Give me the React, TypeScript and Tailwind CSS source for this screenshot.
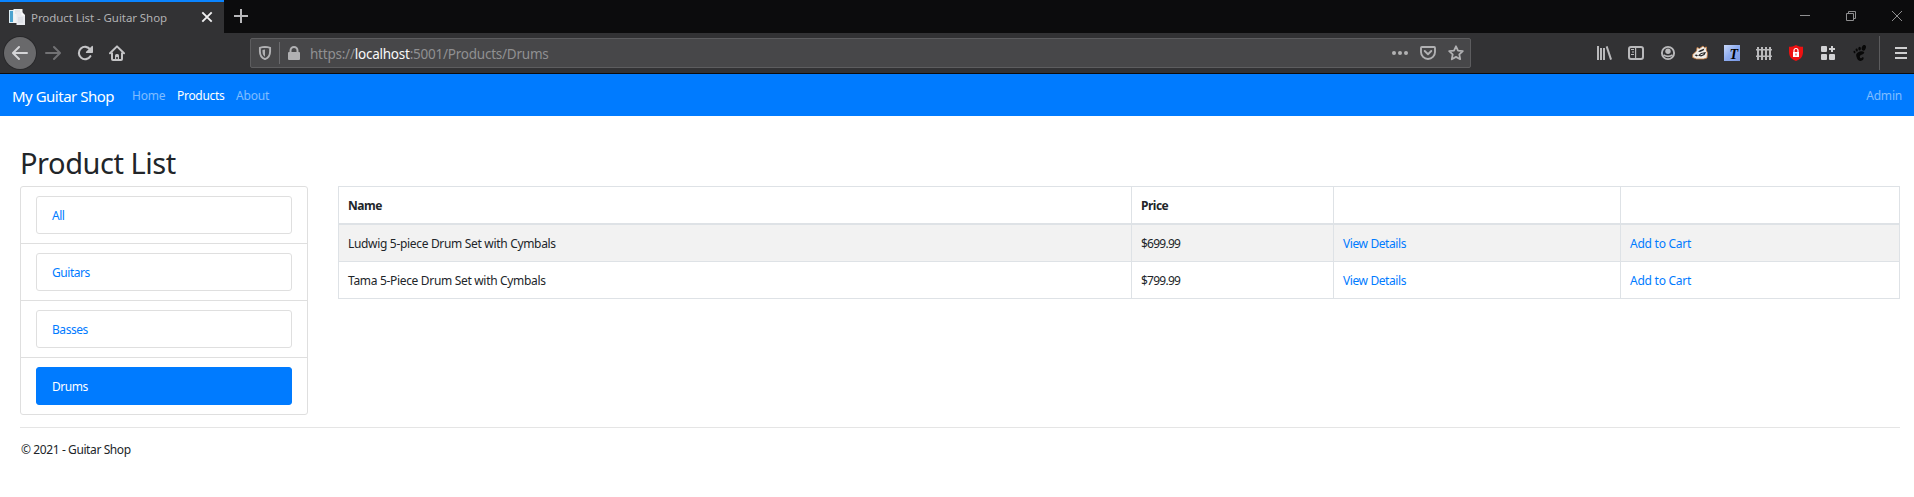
import type { ReactNode } from 'react';

function Icon({ children, className = '' }: { children: ReactNode; className?: string }) {
  return (
    <svg viewBox="0 0 16 16" className={`size-4 shrink-0 ${className}`} fill="currentColor">
      {children}
    </svg>
  );
}

function PageIcon() {
  return (
    <Icon>
      <path d="M0 1h7v13H0z" fill="#dfeef5" />
      <path d="M1 2h3v11H1z" fill="#4ba3cf" />
      <path d="M4.500 0h9v14h-9z" fill="#f2f4f4" />
      <path d="M7.500 3h5.500l3 3v10H7.500z" fill="#e8eaef" />
      <path d="M12.500 3v3.500H16z" fill="#fbfbfd" />
      <path d="M6 2h5M6 4h1.500M9 9h5M9 11h5M9 13h5" stroke="#d3d7df" />
    </Icon>
  );
}

function TabStrip() {
  return (
    <div className="flex h-[33px] bg-[#0c0c0d]">
      <div className="flex h-full w-56 items-center border-t-2 border-[#0a84ff] bg-[#323234] px-[9px] pb-px text-[#b1b1b3]">
        <PageIcon />
        <span className="ml-1.5 flex-1 pt-px text-[11.5px] tracking-[-0.07px] whitespace-nowrap">Product List - Guitar Shop</span>
        <Icon className="text-[#f0f0f1]">
          <path d="M3.300 3.300l9.400 9.400M12.700 3.300l-9.400 9.400" stroke="currentColor" strokeWidth="1.9" />
        </Icon>
      </div>
      <Icon className="mt-2 ml-[9px] text-[#b8b8ba]">
        <path d="M7 1h2v6h6v2H9v6H7V9H1V7h6z" />
      </Icon>
      <div className="ml-auto flex gap-[30px] pt-2 pr-[9px] text-[#8f8f90]">
        <Icon>
          <path d="M3 7h10v1H3z" />
        </Icon>
        <Icon>
          <path d="M3.5 5.5h7v7h-7zM5.5 5V3.5h7v7H11" fill="none" stroke="currentColor" />
        </Icon>
        <Icon>
          <path d="M3 3l10 10M13 3L3 13" stroke="currentColor" />
        </Icon>
      </div>
    </div>
  );
}

function AddressBar() {
  return (
    <div className="ml-[125px] flex h-[30px] w-[1221px] items-center rounded-[2px] border border-[#5d5d5f] bg-[#474749] pl-1.5 text-[#b1b1b3]">
      <Icon>
        <path d="M8 1.900c2 .1 3.700.5 5.100 1v3.600c0 3.700-1.600 6.300-5.100 7.600-3.500-1.300-5.100-3.900-5.100-7.600V2.900c1.400-.5 3.100-.9 5.100-1z" fill="none" stroke="currentColor" strokeWidth="1.900" />
        <path d="M8 4.500v7.200c-1.800-1.100-2.500-2.800-2.500-5.200V5c.8-.3 1.600-.5 2.500-.5z" />
      </Icon>
      <div className="ml-1.5 h-[22px] w-px bg-[#6a6a6d]" />
      <Icon className="ml-1.5">
        <path d="M3.500 7V5.500a4.500 4.500 0 0 1 9 0V7h.5a1 1 0 0 1 1 1v6a1 1 0 0 1-1 1H3a1 1 0 0 1-1-1V8a1 1 0 0 1 1-1zM5.500 7h5V5.500a2.500 2.500 0 0 0-5 0z" />
      </Icon>
      <span className="ml-2 pt-0.5 text-[13.5px] tracking-[-0.23px] whitespace-nowrap text-[#909092]">
        https://<span className="text-[#f9f9fa]">localhost</span>:5001/Products/Drums
      </span>
      <div className="ml-auto flex gap-3 pr-1.5">
        <Icon>
          <circle cx="2" cy="8" r="2" />
          <circle cx="8" cy="8" r="2" />
          <circle cx="14" cy="8" r="2" />
        </Icon>
        <Icon>
          <path d="M1.900 2h12.200a.9.900 0 0 1 .9.900V7A7 7 0 0 1 1 7V2.900a.9.900 0 0 1 .9-.900z" fill="none" stroke="currentColor" strokeWidth="1.900" />
          <path d="M4.700 6L8 9.200 11.300 6" fill="none" stroke="currentColor" strokeWidth="1.900" strokeLinecap="round" strokeLinejoin="round" />
        </Icon>
        <Icon>
          <path d="M8 1.300l2 4.300 4.800.6-3.500 3.200.9 4.800L8 11.900l-4.200 2.300.9-4.800L1.200 6.200 6 5.600z" fill="none" stroke="currentColor" strokeWidth="1.800" strokeLinejoin="round" />
        </Icon>
      </div>
    </div>
  );
}

function Extensions() {
  return (
    <div className="ml-auto flex h-full items-center gap-4 text-[#b9b9bb]">
      <Icon>
        <path d="M1 1h2v14H1zM4 3h2v12H4zM7 3h2v12H7zM9.700 1.700l1.900-.7L16 14.300l-1.900.7z" />
      </Icon>
      <Icon>
        <rect x="1" y="2" width="14" height="12" rx="2" fill="none" stroke="currentColor" strokeWidth="2" />
        <path d="M7 2h1.200v12H7zM3 4h3v1H3zM4 6.500h2v1H4zM3 9h3v1H3z" />
      </Icon>
      <Icon>
        <circle cx="8" cy="8" r="6.100" fill="none" stroke="currentColor" strokeWidth="1.900" />
        <circle cx="8" cy="6.300" r="2.700" />
        <path d="M3.500 10c2 1.200 3 1.300 4.500 1.300s2.500-.1 4.500-1.300" fill="none" stroke="currentColor" strokeWidth="1.700" />
      </Icon>
      <Icon>
        <path d="M.7 9.500L4.500 6l.5-3.500 2.500 1L11 1l1.500 1.500 2-.5-.2 3 1.200 3-.5 5-3.500 1H4.500L.7 12.500z" fill="#f1eee9" stroke="#c5783b" strokeWidth=".8" />
        <path d="M6 6.500L8.500 5l4-1.500-1 2L8 7zM2.500 10l2-.5L6 10.500l-1.500 1zM6 10.500l3-2.500 5-1-1.500 3-3.500 1.500z" fill="#242426" />
        <path d="M8.500 9.800l3-1" stroke="#f1eee9" />
      </Icon>
      <div className="flex size-4 items-end justify-end bg-linear-to-br from-[#c9d8fa] via-[#8dabef] to-[#7897e3] pr-0.5 pb-px font-['Liberation_Serif',serif] text-[14px] leading-[11px] font-bold text-black italic">
        T
      </div>
      <Icon>
        <path d="M1 2h2v13H1zM5 2h2v13H5zM9 2h2v13H9zM13 2h2v13h-2zM0 4h16v1.500H0zM0 10.500h16V12H0z" />
      </Icon>
      <Icon>
        <path d="M8 0c2 1.300 4.500 1.800 7 1.800V7c0 4.500-2.500 7.500-7 9-4.500-1.500-7-4.500-7-9V1.800C3.500 1.800 6 1.300 8 0z" fill="#ee1111" />
        <path d="M5 7h6v5H5z" fill="#fff" />
        <path d="M6 7V5.500a2 2 0 0 1 4 0V7" fill="none" stroke="#fff" strokeWidth="1.200" />
        <path d="M7.500 8.500h1v2h-1z" fill="#e11" />
      </Icon>
      <Icon className="text-[#d2d2d4]">
        <path d="M2 1h4a1 1 0 0 1 1 1v4a1 1 0 0 1-1 1H2a1 1 0 0 1-1-1V2a1 1 0 0 1 1-1zM2 9h4a1 1 0 0 1 1 1v4a1 1 0 0 1-1 1H2a1 1 0 0 1-1-1v-4a1 1 0 0 1 1-1zM10 9h4a1 1 0 0 1 1 1v4a1 1 0 0 1-1 1h-4a1 1 0 0 1-1-1v-4a1 1 0 0 1 1-1zM11 1h2v2h2v2h-2v2h-2V5H9V3h2z" />
      </Icon>
      <Icon className="text-[#080808]">
        <ellipse cx="11.800" cy="2.800" rx="2" ry="2.900" transform="rotate(20 11.800 2.800)" />
        <ellipse cx="7.600" cy="3.600" rx="1.300" ry="1.900" />
        <ellipse cx="4.700" cy="5" rx="1.100" ry="1.600" transform="rotate(-15 4.700 5)" />
        <ellipse cx="2.500" cy="7" rx=".9" ry="1.300" transform="rotate(-25 2.500 7)" />
        <path d="M12 7c-1-1.300-4-1-6.200.6C3.500 9.300 4 11 5 13.200 6 15.500 8 16.500 10 15.500c1.800-.9 2-2.800 1.200-3.300-.8-.5-1.200 1.300-2.400 1-1.200-.4-1.400-2-.3-2.900C9.800 9.300 13 9 12 7z" />
      </Icon>
      <div className="-ml-[5px] flex h-full items-center gap-[13px] pr-[5px]">
        <div className="h-[34px] w-px bg-[#5b5b5d]" />
        <Icon className="text-[#cfcfd0]">
          <path d="M2 2h12v2H2zM2 7h12v2H2zM2 12h12v2H2z" />
        </Icon>
      </div>
    </div>
  );
}

function Toolbar() {
  return (
    <div className="flex h-[41px] items-center border-b border-[#0c0c0d] bg-[#323234] pl-1 text-[#c4c4c6]">
      <div className="flex size-8 items-center justify-center rounded-full bg-[#69696b] ring-1 ring-[#29292b]">
        <Icon className="text-[#d5d5d7]">
          <path d="M15 7H3.414l4.293-4.293a1 1 0 0 0-1.414-1.414l-6 6a1 1 0 0 0 0 1.414l6 6a1 1 0 0 0 1.414-1.414L3.414 9H15a1 1 0 0 0 0-2z" />
        </Icon>
      </div>
      <Icon className="ml-[9px] text-[#727274]">
        <path d="M1 7h11.586L8.293 2.707a1 1 0 0 1 1.414-1.414l6 6a1 1 0 0 1 0 1.414l-6 6a1 1 0 0 1-1.414-1.414L12.586 9H1a1 1 0 0 1 0-2z" />
      </Icon>
      <Icon className="ml-4">
        <path d="M13.200 4.500A6.200 6.200 0 1 0 13.400 11.200" fill="none" stroke="currentColor" strokeWidth="2.100" strokeLinecap="round" />
        <path d="M15.200.8c.5 0 .8.300.8.800V7c0 .6-.4 1-1 1H9.600c-.8 0-1-.8-.5-1.300z" />
      </Icon>
      <Icon className="ml-4">
        <path d="M1 8.200L8 1.400l7 6.800" fill="none" stroke="currentColor" strokeWidth="2" strokeLinecap="round" strokeLinejoin="round" />
        <path d="M3 7.500V14a1 1 0 0 0 1 1h8a1 1 0 0 0 1-1V7.500" fill="none" stroke="currentColor" strokeWidth="2" />
        <path d="M6 15v-4.500A1.500 1.500 0 0 1 7.500 9h1a1.500 1.500 0 0 1 1.500 1.500V15H8.800v-3H7.200v3z" />
      </Icon>
      <AddressBar />
      <Extensions />
    </div>
  );
}

function NavBar() {
  return (
    <nav className="flex h-[42px] items-center bg-[#007bff] px-3 pt-0.5 text-[12px] tracking-[-0.200px] whitespace-nowrap text-white/50">
      <a className="w-[120px] pb-px text-[15px] tracking-[-0.500px] text-white">My Guitar Shop</a>
      <a className="w-[45px]">Home</a>
      <a className="w-[59px] tracking-[-0.300px] text-white">Products</a>
      <a>About</a>
      <a className="ml-auto">Admin</a>
    </nav>
  );
}

const categories = ['All', 'Guitars', 'Basses', 'Drums'];
const products = [
  { name: 'Ludwig 5-piece Drum Set with Cymbals', price: '$699.99' },
  { name: 'Tama 5-Piece Drum Set with Cymbals', price: '$799.99' },
];

function Categories() {
  return (
    <ul className="h-[229px] w-72 divide-y divide-[#dfdfdf] rounded-[3px] border border-[#dfdfdf] tracking-[-0.450px]">
      {categories.map((c) => (
        <li key={c} className="h-[57px] px-[15px] pt-[9px]">
          <a
            className={`flex h-[38px] items-center rounded-[3px] border px-[15px] pt-px ${
              c === 'Drums' ? 'border-[#007bff] bg-[#007bff] text-white' : 'border-[#dfdfdf] text-[#007bff]'
            }`}
          >
            {c}
          </a>
        </li>
      ))}
    </ul>
  );
}

function Products() {
  return (
    <table className="w-[1562px] table-fixed border-separate border-spacing-0 border-t border-l border-[#dee2e6] text-left [&_td]:border-r [&_td]:border-b [&_td]:border-[#dee2e6] [&_td]:px-[9px] [&_td]:pt-0.5 [&_td]:pb-0 [&_th]:border-r [&_th]:border-b-2 [&_th]:border-[#dee2e6] [&_th]:px-[9px] [&_th]:pt-0.5 [&_th]:pb-0">
      <colgroup>
        <col className="w-[793px]" />
        <col className="w-[202px]" />
        <col className="w-[287px]" />
        <col className="w-[279px]" />
      </colgroup>
      <thead>
        <tr className="h-[38px] tracking-[-0.500px]">
          <th>Name</th>
          <th>Price</th>
          <th />
          <th />
        </tr>
      </thead>
      <tbody>
        {products.map((p) => (
          <tr key={p.name} className="h-[37px] odd:bg-[#f2f2f2]">
            <td>{p.name}</td>
            <td className="tracking-[-0.750px]">{p.price}</td>
            <td className="tracking-[-0.400px] text-[#007bff]">View Details</td>
            <td className="tracking-[-0.250px] text-[#007bff]">Add to Cart</td>
          </tr>
        ))}
      </tbody>
    </table>
  );
}

export default function App() {
  return (
    <div className="h-[497px] overflow-hidden bg-white font-['Noto_Sans','Open_Sans',sans-serif] text-[12px] leading-[18px] text-[#212529]">
      <TabStrip />
      <Toolbar />
      <NavBar />
      <main className="px-5 pr-3.5 pt-7 tracking-[-0.320px]">
        <h1 className="h-[42px] text-[29px] leading-[38px] tracking-[-0.450px]">Product List</h1>
        <div className="flex items-start gap-[30px]">
          <Categories />
          <Products />
        </div>
        <footer className="mt-3 border-t border-[#e5e5e5] pt-[13px] pl-px tracking-[-0.400px]">© 2021 - Guitar Shop</footer>
      </main>
    </div>
  );
}
